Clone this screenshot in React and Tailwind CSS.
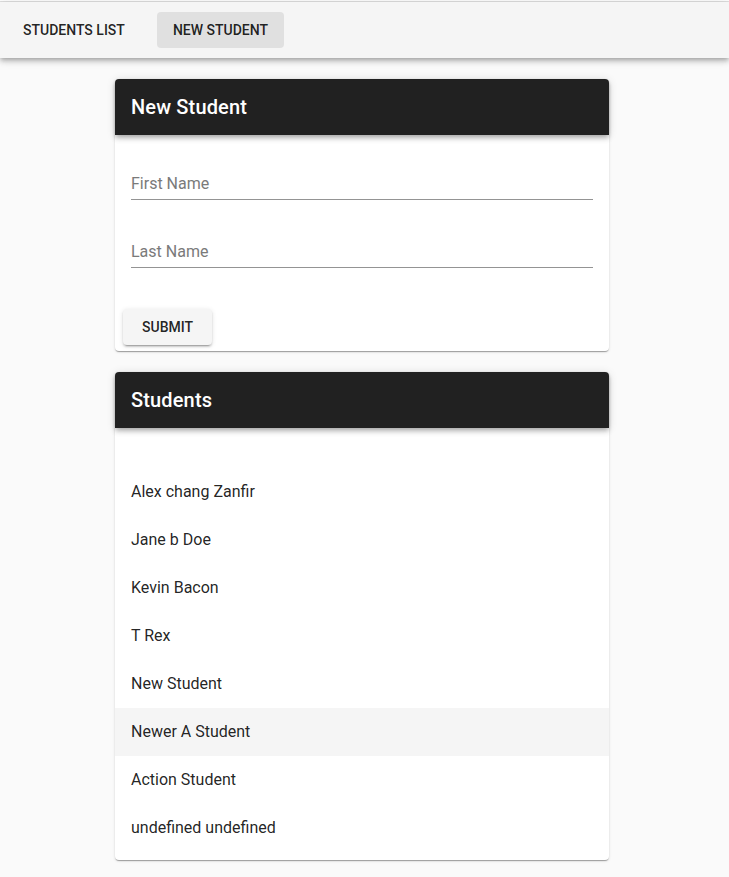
import React from 'react';

const students = [
  'Alex chang Zanfir',
  'Jane b Doe',
  'Kevin Bacon',
  'T Rex',
  'New Student',
  'Newer A Student',
  'Action Student',
  'undefined undefined',
];

function CardHeader({ title }) {
  return (
    <div className="h-14 bg-[#212121] flex items-center px-4 rounded-t shadow-[0_2px_4px_-1px_rgba(0,0,0,0.2),0_4px_5px_0_rgba(0,0,0,0.14),0_1px_10px_0_rgba(0,0,0,0.12)] relative z-10">
      <h2 className="text-[20px] font-medium tracking-[0.0075em] text-white">{title}</h2>
    </div>
  );
}

function Field({ placeholder }) {
  return (
    <div className="border-b border-[#949494]">
      <input
        placeholder={placeholder}
        className="w-full h-8 text-[16px] text-[rgba(0,0,0,0.87)] placeholder:text-[#7a7a7a] outline-none bg-transparent"
      />
    </div>
  );
}

export default function App() {
  return (
    <div className="min-h-[877px] bg-[#fafafa] font-['Roboto',sans-serif] text-[rgba(0,0,0,0.87)]">
      {/* top nav */}
      <div className="border-t border-[#e0e0e0] mt-px">
        <nav className="h-14 bg-[#f5f5f5] flex items-center pl-[7px] gap-4 shadow-[0_2px_4px_-1px_rgba(0,0,0,0.2),0_4px_5px_0_rgba(0,0,0,0.14),0_1px_10px_0_rgba(0,0,0,0.12)]">
          <button className="h-9 px-4 rounded text-[14px] font-medium uppercase">
            Students List
          </button>
          <button className="h-9 px-4 rounded bg-[#e0e0e0] text-[14px] font-medium uppercase">
            New Student
          </button>
        </nav>
      </div>

      <main className="w-[494px] ml-[115px] pt-[21px] pb-4 flex flex-col gap-[21px]">
        {/* form card */}
        <section className="bg-white rounded shadow-[0_2px_1px_-1px_rgba(0,0,0,0.2),0_1px_1px_0_rgba(0,0,0,0.14),0_1px_3px_0_rgba(0,0,0,0.12)]">
          <CardHeader title="New Student" />
          <div className="px-4 pt-8 flex flex-col gap-[35px]">
            <Field placeholder="First Name" />
            <Field placeholder="Last Name" />
          </div>
          <div className="px-2 pt-[41px] pb-[6px]">
            <button className="h-9 px-[19px] rounded bg-[#f5f5f5] text-[14px] font-medium uppercase shadow-[0_3px_1px_-2px_rgba(0,0,0,0.2),0_2px_2px_0_rgba(0,0,0,0.14),0_1px_5px_0_rgba(0,0,0,0.12)]">
              Submit
            </button>
          </div>
        </section>

        {/* list card */}
        <section className="bg-white rounded shadow-[0_2px_1px_-1px_rgba(0,0,0,0.2),0_1px_1px_0_rgba(0,0,0,0.14),0_1px_3px_0_rgba(0,0,0,0.12)]">
          <CardHeader title="Students" />
          <ul className="pt-10 pb-2">
            {students.map((s) => (
              <li
                key={s}
                className={`h-12 flex items-center px-4 text-[16px] ${s === 'Newer A Student' ? 'bg-[#f5f5f5]' : ''}`}
              >
                {s}
              </li>
            ))}
          </ul>
        </section>
      </main>
    </div>
  );
}
